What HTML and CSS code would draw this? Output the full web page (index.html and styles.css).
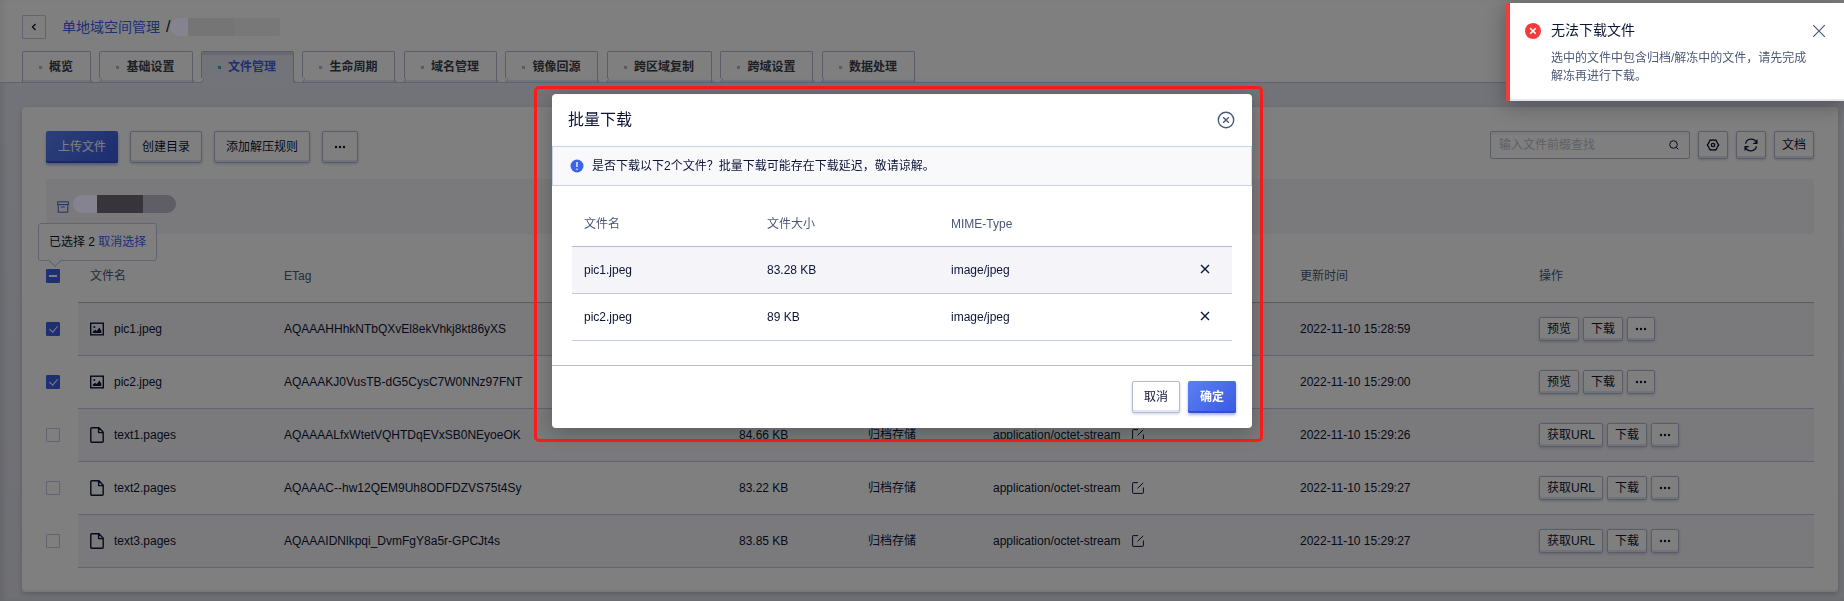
FILE: index.html
```html
<!DOCTYPE html>
<html lang="zh-CN">
<head>
<meta charset="utf-8">
<meta name="viewport" content="width=device-width, initial-scale=1">
<title>文件管理</title>
<link rel="stylesheet" href="styles.css">
</head>
<body>
<svg class="sprite" aria-hidden="true">
  <symbol id="i-dots" viewBox="0 0 12 12"><circle cx="2" cy="6" r="1.200"/><circle cx="6" cy="6" r="1.200"/><circle cx="10" cy="6" r="1.200"/></symbol>
  <symbol id="i-image" viewBox="0 0 14 14"><rect x=".7" y="1.2" width="12.6" height="11.6" fill="none" stroke="currentColor" stroke-width="1.4"/><circle cx="4.3" cy="4.9" r="1"/><path d="M2.8 11V9.6l2.4-1.8 1.5 1.1 2.7-3.4 1.9 3.2V11z"/></symbol>
  <symbol id="i-file" viewBox="0 0 14 16"><path d="M1.7.8H9l4.2 4.4v9a1 1 0 0 1-1 1H1.8a1 1 0 0 1-1-1V1.700a.9.9 0 0 1 .9-.9zM8.600 1v4.600h4.500" fill="none" stroke="currentColor" stroke-width="1.400" stroke-linejoin="round"/></symbol>
  <symbol id="i-edit" viewBox="0 0 12 12"><path d="M6 .6H1.200a.6.6 0 0 0-.6.6v9.600c0 .3.3.6.6.6h9.600c.3 0 .6-.3.6-.6V5.500M5.600 6.400 11.200.8" fill="none" stroke="currentColor"/></symbol>
  <symbol id="i-close" viewBox="0 0 12 12"><path d="M1 1l10 10M11 1 1 11" fill="none" stroke="currentColor"/></symbol>
</svg>

<div class="page">
  <header class="header">
    <div class="crumbs">
      <button class="back" aria-label="返回"><svg width="6" height="8" viewBox="0 0 6 8"><path d="M4.500 1 1.500 4l3 3" fill="none" stroke="currentColor" stroke-width="1.300"/></svg></button>
      <a class="crumb" href="#">单地域空间管理</a>
      <span class="slash">/</span>
      <span class="mask mask-title"><i></i><i></i><i></i></span>
    </div>
    <nav>
      <ul class="tabs">
        <li class="tab"><a href="#">概览</a></li>
        <li class="tab"><a href="#">基础设置</a></li>
        <li class="tab active"><a href="#" aria-current="page">文件管理</a></li>
        <li class="tab"><a href="#">生命周期</a></li>
        <li class="tab"><a href="#">域名管理</a></li>
        <li class="tab"><a href="#">镜像回源</a></li>
        <li class="tab"><a href="#">跨区域复制</a></li>
        <li class="tab"><a href="#">跨域设置</a></li>
        <li class="tab"><a href="#">数据处理</a></li>
      </ul>
    </nav>
  </header>

  <main class="card">
    <div class="toolbar">
      <div class="actions">
        <button class="btn primary">上传文件</button>
        <button class="btn">创建目录</button>
        <button class="btn">添加解压规则</button>
        <button class="btn" aria-label="更多"><svg width="12" height="12"><use href="#i-dots"/></svg></button>
      </div>
      <div class="tools">
        <label class="search">
          <input type="text" placeholder="输入文件前缀查找" aria-label="输入文件前缀查找">
          <svg width="10" height="10" viewBox="0 0 10 10"><circle cx="4.500" cy="4.500" r="3.800" fill="none" stroke="currentColor"/><path d="M7.300 7.300 9.400 9.400" stroke="currentColor"/></svg>
        </label>
        <button class="btn medium" aria-label="设置"><svg width="14" height="14" viewBox="0 0 14 14"><path d="M4.300 1.800 5.500 2.300 7 1.900 8.500 2.300 9.700 1.800 10.900 3.900 11.400 5.200 12.700 7 11.400 8.800 10.900 10.100 9.700 12.200 8.500 11.700 7 12.100 5.500 11.700 4.300 12.200 3.100 10.100 2.600 8.800 1.300 7 2.600 5.200 3.100 3.900z" fill="none" stroke="currentColor" stroke-width="1.300" stroke-linejoin="round"/><circle cx="7" cy="7" r="1.700" fill="none" stroke="currentColor" stroke-width="1.300"/></svg></button>
        <button class="btn medium" aria-label="刷新"><svg width="14" height="14" viewBox="0 0 14 14"><path d="M1.600 5.600A5.600 5.600 0 0 1 12.400 5M12.400 8.400A5.600 5.600 0 0 1 1.600 9M12.900 1.600V5.400H9.200M1.100 12.400V8.600h3.700" fill="none" stroke="currentColor" stroke-width="1.300"/></svg></button>
        <button class="btn medium">文档</button>
      </div>
    </div>

    <div class="path">
      <svg width="12" height="12" viewBox="0 0 12 12"><path d="M.6.8h10.800v2.800H.6zM1.200 3.600v7.600h9.600V3.600M4.200 6h3.600" fill="none" stroke="currentColor"/></svg>
      <span class="mask mask-path"><i></i><i></i><i></i></span>
    </div>

    <div class="files-wrap">
      <div class="selection">已选择 2 <a href="#">取消选择</a></div>
      <table class="files">
        <colgroup><col class="c-check"><col class="c-name"><col class="c-etag"><col class="c-size"><col class="c-store"><col class="c-mime"><col class="c-time"><col></colgroup>
        <thead>
          <tr><th class="pick"><input class="check partial" type="checkbox" aria-label="全选"></th><th>文件名</th><th>ETag</th><th></th><th></th><th></th><th>更新时间</th><th>操作</th></tr>
        </thead>
        <tbody>
          <tr><td class="pick"><input class="check" type="checkbox" checked aria-label="pic1.jpeg"></td>
            <td><span class="name"><svg width="14" height="14"><use href="#i-image"/></svg>pic1.jpeg</span></td><td>AQAAAHHhkNTbQXvEl8ekVhkj8kt86yXS</td><td></td><td></td><td></td><td>2022-11-10 15:28:59</td>
            <td><div class="ops"><button class="btn small">预览</button><button class="btn small">下载</button><button class="btn small" aria-label="更多"><svg width="12" height="12"><use href="#i-dots"/></svg></button></div></td></tr>
          <tr><td class="pick"><input class="check" type="checkbox" checked aria-label="pic2.jpeg"></td>
            <td><span class="name"><svg width="14" height="14"><use href="#i-image"/></svg>pic2.jpeg</span></td><td>AQAAAKJ0VusTB-dG5CysC7W0NNz97FNT</td><td></td><td></td><td></td><td>2022-11-10 15:29:00</td>
            <td><div class="ops"><button class="btn small">预览</button><button class="btn small">下载</button><button class="btn small" aria-label="更多"><svg width="12" height="12"><use href="#i-dots"/></svg></button></div></td></tr>
          <tr><td class="pick"><input class="check" type="checkbox" aria-label="text1.pages"></td>
            <td><span class="name"><svg width="14" height="16"><use href="#i-file"/></svg>text1.pages</span></td><td>AQAAAALfxWtetVQHTDqEVxSB0NEyoeOK</td><td>84.66 KB</td><td>归档存储</td>
            <td><span class="mime">application/octet-stream<svg width="12" height="12"><use href="#i-edit"/></svg></span></td><td>2022-11-10 15:29:26</td>
            <td><div class="ops"><button class="btn small">获取URL</button><button class="btn small">下载</button><button class="btn small" aria-label="更多"><svg width="12" height="12"><use href="#i-dots"/></svg></button></div></td></tr>
          <tr><td class="pick"><input class="check" type="checkbox" aria-label="text2.pages"></td>
            <td><span class="name"><svg width="14" height="16"><use href="#i-file"/></svg>text2.pages</span></td><td>AQAAAC--hw12QEM9Uh8ODFDZVS75t4Sy</td><td>83.22 KB</td><td>归档存储</td>
            <td><span class="mime">application/octet-stream<svg width="12" height="12"><use href="#i-edit"/></svg></span></td><td>2022-11-10 15:29:27</td>
            <td><div class="ops"><button class="btn small">获取URL</button><button class="btn small">下载</button><button class="btn small" aria-label="更多"><svg width="12" height="12"><use href="#i-dots"/></svg></button></div></td></tr>
          <tr><td class="pick"><input class="check" type="checkbox" aria-label="text3.pages"></td>
            <td><span class="name"><svg width="14" height="16"><use href="#i-file"/></svg>text3.pages</span></td><td>AQAAAIDNlkpqi_DvmFgY8a5r-GPCJt4s</td><td>83.85 KB</td><td>归档存储</td>
            <td><span class="mime">application/octet-stream<svg width="12" height="12"><use href="#i-edit"/></svg></span></td><td>2022-11-10 15:29:27</td>
            <td><div class="ops"><button class="btn small">获取URL</button><button class="btn small">下载</button><button class="btn small" aria-label="更多"><svg width="12" height="12"><use href="#i-dots"/></svg></button></div></td></tr>
        </tbody>
      </table>
    </div>
  </main>
</div>

<div class="backdrop"></div>

<div class="overlay">
  <div class="highlight">
    <section class="modal" role="dialog" aria-labelledby="modal-title">
      <div class="modal-head">
        <h2 id="modal-title">批量下载</h2>
        <button class="bare" aria-label="关闭"><svg width="18" height="18" viewBox="0 0 18 18"><circle cx="9" cy="9" r="7.700" fill="none" stroke="currentColor" stroke-width="1.400"/><path d="M6.200 6.200l5.600 5.600M11.800 6.200l-5.600 5.600" stroke="currentColor" stroke-width="1.400"/></svg></button>
      </div>
      <div class="notice">
        <svg width="14" height="14" viewBox="0 0 14 14"><circle cx="7" cy="7" r="6.500" fill="#3d63ea"/><path d="M7 3v5" stroke="#fff" stroke-width="1.300"/><circle cx="7" cy="10.200" r=".8" fill="#fff"/></svg>
        <span>是否下载以下2个文件？批量下载可能存在下载延迟，敬请谅解。</span>
      </div>
      <div class="modal-body">
        <table class="picked">
          <colgroup><col class="p-name"><col class="p-size"><col><col class="p-del"></colgroup>
          <thead><tr><th>文件名</th><th>文件大小</th><th>MIME-Type</th><th></th></tr></thead>
          <tbody>
            <tr><td>pic1.jpeg</td><td>83.28 KB</td><td>image/jpeg</td><td><button class="bare dark" aria-label="移除 pic1.jpeg"><svg width="10" height="10" viewBox="0 0 10 10"><path d="M1 1l8 8M9 1 1 9" stroke="currentColor" stroke-width="1.400"/></svg></button></td></tr>
            <tr><td>pic2.jpeg</td><td>89 KB</td><td>image/jpeg</td><td><button class="bare dark" aria-label="移除 pic2.jpeg"><svg width="10" height="10" viewBox="0 0 10 10"><path d="M1 1l8 8M9 1 1 9" stroke="currentColor" stroke-width="1.400"/></svg></button></td></tr>
          </tbody>
        </table>
      </div>
      <div class="modal-foot">
        <button class="btn">取消</button>
        <button class="btn primary strong">确定</button>
      </div>
    </section>
  </div>
</div>

<aside class="toast" role="alert">
  <svg class="toast-icon" width="16" height="16" viewBox="0 0 16 16"><circle cx="8" cy="8" r="8" fill="#f33b3b"/><path d="M5.200 5.200l5.600 5.600M10.800 5.200l-5.600 5.600" stroke="#fff" stroke-width="1.600"/></svg>
  <div class="toast-text">
    <strong>无法下载文件</strong>
    <p>选中的文件中包含归档/解冻中的文件，请先完成解冻再进行下载。</p>
  </div>
  <button class="bare" aria-label="关闭"><svg width="14" height="14"><use href="#i-close"/></svg></button>
</aside>
</body>
</html>
```
FILE: styles.css
```css
:root {
  --ink: #0c1535;
  --muted: #4a5878;
  --line: #c3c9e0;
  --line-strong: #b4bbcf;
  --blue: #3d5fe6;
  --soft: #e0e6f8;
  --stripe: #f4f4f9;
}

* { box-sizing: border-box; }

body {
  margin: 0;
  overflow: hidden;
  color: var(--ink);
  font: 12px/18px "Liberation Sans", "Noto Sans CJK SC", sans-serif;
}

a { color: var(--blue); text-decoration: none; }
button, input { font: inherit; color: inherit; }
svg { display: block; flex: none; fill: currentColor; }
.sprite { position: absolute; width: 0; height: 0; }

.page {
  min-height: 100vh;
  background: linear-gradient(#e6e9f2, #dedfe8);
  box-shadow: inset 4px 0 4px rgba(0, 0, 40, .08);
}

/* header */
.header {
  padding: 15px 22px 0;
  background: #fff;
  border-bottom: 1px solid var(--line);
  box-shadow: inset 4px 0 4px rgba(0, 0, 40, .05);
}
.crumbs { display: flex; align-items: center; height: 24px; font-size: 14px; }
.back {
  display: grid;
  place-items: center;
  width: 24px;
  height: 24px;
  margin-right: 16px;
  padding: 0;
  background: none;
  border: 1px solid var(--line);
  border-radius: 1px;
}
.slash { margin-left: 6px; font-size: 16px; }
.mask { display: flex; position: relative; z-index: 15; overflow: hidden; }
.mask i { height: 18px; }
.mask-title { border-radius: 9px 3px 3px 9px; }
.mask-title i:nth-child(1) { width: 18px; background: #85838d; }
.mask-title i:nth-child(2) { width: 46px; background: #757575; }
.mask-title i:nth-child(3) { width: 46px; background: #787878; }

.tabs {
  display: flex;
  justify-content: space-between;
  max-width: 893px;
  margin: 12px 0 -1px;
  padding: 0;
  list-style: none;
}
.tab {
  position: relative;
  height: 32px;
  border: 1px solid var(--line-strong);
  border-bottom-color: var(--line);
  border-radius: 2px 2px 0 0;
  background: #fff;
  box-shadow: inset 0 -2px var(--soft);
}
.tab::after {
  content: "";
  position: absolute;
  z-index: 1;
  left: 100%;
  bottom: -1px;
  width: 10px;
  height: 4px;
  background: #fff;
  border: 1px solid var(--line);
  border-top: 0;
  border-radius: 0 0 5px 5px;
}
.tab:last-child::after { display: none; }
.tab a {
  display: flex;
  align-items: center;
  gap: 7px;
  height: 30px;
  padding: 0 17px 0 16px;
  color: #3a3f4c;
  font-weight: bold;
}
.tab a::before { content: ""; width: 3px; height: 3px; background: #b4b8c0; }
.tab.active {
  background: #e6e9f2;
  border-bottom-color: #e6e9f2;
  box-shadow: inset 0 3px #cfd2e2;
}
.tab.active a { color: var(--blue); }
.tab.active a::before { background: #35a9b8; }

/* buttons */
.btn {
  display: inline-flex;
  align-items: center;
  justify-content: center;
  height: 32px;
  padding: 0 11px 1px;
  background: #fff;
  border: 1px solid var(--line-strong);
  border-radius: 2px;
  box-shadow: inset 0 -2px var(--soft), 0 1px 3px rgba(20, 30, 80, .2);
  white-space: nowrap;
}
.btn.primary {
  color: #fff;
  border: 0;
  padding: 0 12px;
  background: linear-gradient(135deg, #5b80f2, #3a5ae2);
  box-shadow: inset 0 -2px #3450c8, 0 2px 3px rgba(50, 80, 220, .45);
}
.btn.strong { font-weight: bold; }
.btn.medium { height: 28px; padding: 0 7px 1px; }
.btn.small { height: 24px; padding: 0 7px 1px; }
.bare { padding: 0; color: var(--muted); background: none; border: 0; }
.bare.dark { color: var(--ink); }

/* content card */
.card {
  margin: 24px 6px 9px 22px;
  padding: 24px;
  background: #fff;
  border-radius: 4px;
  box-shadow: inset 0 -2px #f0f0f0, 0 2px 5px rgba(20, 25, 60, .2);
}
.toolbar { display: flex; justify-content: space-between; align-items: flex-start; }
.actions { display: flex; gap: 12px; }
.tools { display: flex; gap: 8px; }
.search {
  display: flex;
  align-items: center;
  width: 200px;
  height: 28px;
  padding: 0 10px 0 8px;
  border: 1px solid var(--line-strong);
  border-radius: 2px;
  box-shadow: inset 0 3px #f4f4f8;
}
.search input { flex: 1; min-width: 0; padding: 0; border: 0; outline: 0; background: none; }
.search input::placeholder { color: #bfc2ca; }

.path {
  display: flex;
  align-items: center;
  gap: 4px;
  height: 55px;
  margin-top: 16px;
  padding: 0 11px 5px;
  background: var(--stripe);
}
.path svg { color: var(--blue); margin-top: 5px; }
.mask-path { border-radius: 9px; }
.mask-path i:nth-child(1) { width: 24px; background: #858390; }
.mask-path i:nth-child(2) { width: 46px; background: #37353b; }
.mask-path i:nth-child(3) { width: 33px; background: #5f5e66; }

/* file table */
.files-wrap { position: relative; }
.selection {
  position: absolute;
  top: -11px;
  left: -8px;
  padding: 9px 10px;
  background: #fff;
  border: 1px solid var(--line);
  border-radius: 3px;
}
.selection::after {
  content: "";
  position: absolute;
  left: 11px;
  bottom: -5px;
  width: 9px;
  height: 9px;
  background: #fff;
  border: solid var(--line);
  border-width: 0 1px 1px 0;
  transform: rotate(45deg);
}
table { width: 100%; table-layout: fixed; border-collapse: separate; border-spacing: 0; }
th, td { padding: 0 12px; text-align: left; border-bottom: 1px solid var(--line); white-space: nowrap; }
th { color: var(--muted); font-weight: normal; border-bottom-color: var(--line-strong); }
.files th { height: 69px; padding-top: 16px; }
.files td { height: 53px; }
.files tbody tr:nth-child(odd) td:not(.pick) { background: var(--stripe); }
.files .pick { padding-left: 0; padding-right: 0; border-bottom-color: transparent; }
.c-check { width: 32px; }
.c-name { width: 194px; }
.c-etag { width: 455px; }
.c-size { width: 129px; }
.c-store { width: 125px; }
.c-mime { width: 307px; }
.c-time { width: 239px; }
.name, .mime { display: flex; align-items: center; gap: 10px; }
.mime { gap: 12px; }
.ops { display: flex; gap: 4px; }

.check {
  display: grid;
  place-items: center;
  width: 14px;
  height: 14px;
  margin: 0;
  appearance: none;
  background: #fff;
  border: 1px solid var(--line);
  border-radius: 1px;
}
.check:checked, .check.partial { background: var(--blue); border-color: var(--blue); }
.check.partial::after { content: ""; width: 8px; height: 2px; background: #fff; }
.check:checked::after {
  content: "";
  width: 4px;
  height: 7px;
  margin-bottom: 2px;
  border: solid #fff;
  border-width: 0 1px 1px 0;
  transform: rotate(40deg);
}

/* modal */
.backdrop { position: fixed; inset: 0; z-index: 10; background: rgba(0, 0, 0, .5); }
.overlay {
  position: fixed;
  inset: 0;
  z-index: 20;
  display: flex;
  justify-content: center;
  align-items: flex-start;
  padding: 86px 47px 0 0;
}
.highlight { padding: 5px 8px 11px 15px; border: 3px solid #fb1d1d; border-radius: 5px; }
.modal {
  width: 700px;
  max-width: 100%;
  background: #fff;
  border-radius: 4px;
  box-shadow: 0 4px 20px rgba(0, 0, 0, .25);
}
.modal-head { display: flex; align-items: center; justify-content: space-between; height: 52px; padding: 0 17px 0 16px; }
.modal-head h2 { margin: 0; font-size: 16px; line-height: 24px; font-weight: normal; }
.notice {
  display: flex;
  align-items: center;
  gap: 8px;
  height: 40px;
  padding: 0 17px;
  background: #f9f9fc;
  border: 1px solid #c9d1e6;
}
.modal-body { padding: 16px 20px 24px; }
.picked th { height: 45px; }
.picked td { height: 47px; }
.picked tbody tr:nth-child(odd) td { background: var(--stripe); }
.p-name { width: 183px; }
.p-size { width: 184px; }
.p-del { width: 44px; }
.modal-foot {
  display: flex;
  justify-content: flex-end;
  gap: 8px;
  padding: 15px 16px;
  border-top: 1px solid var(--line-strong);
}

/* toast */
.toast {
  position: fixed;
  z-index: 30;
  top: 3px;
  right: 0;
  display: flex;
  align-items: flex-start;
  width: 338px;
  padding: 18px 18px 16px 15px;
  background: #fff;
  border-left: 4px solid #f33b3b;
  box-shadow: inset 0 -2px #e3e5f0, 0 4px 20px rgba(0, 0, 0, .3);
}
.toast-icon { margin: 2px 10px 0 0; }
.toast-text { flex: 1; }
.toast strong { display: block; font-size: 14px; font-weight: normal; }
.toast p { width: 260px; margin: 10px 0 0; color: var(--muted); }
.toast .bare { margin: 3px 0 0 -20px; }
```
